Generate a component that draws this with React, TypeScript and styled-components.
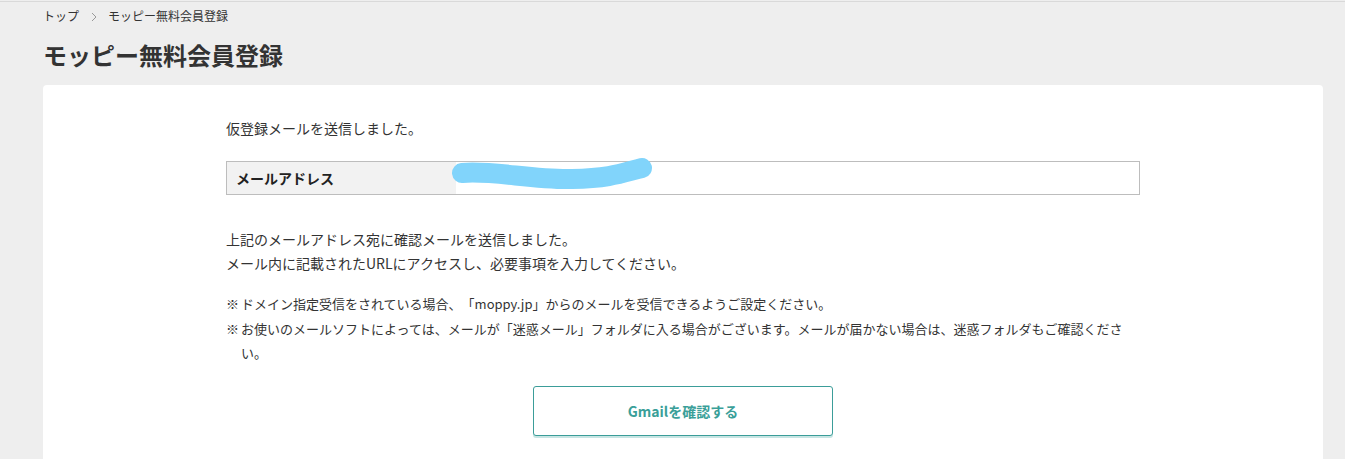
import React from "react";
import styled, { createGlobalStyle } from "styled-components";

const GlobalStyle = createGlobalStyle`
  html, body {
    margin: 0;
    padding: 0;
    background: #eeeeee;
    overflow: hidden;
  }
  body {
    font-family: "Noto Sans CJK JP", "Noto Sans", sans-serif;
    color: #333333;
    text-spacing-trim: space-all;
  }
  * { box-sizing: border-box; }
`;

const Page = styled.div`
  margin-top: 1px;
  border-top: 1px solid #d9d9d9;
  min-height: 458px;
`;

const Breadcrumb = styled.nav`
  display: flex;
  align-items: center;
  height: 28px;
  padding-left: 43px;
  font-size: 12px;
  line-height: 28px;
  color: #333;
`;

const Crumb = styled.span`
  white-space: nowrap;
`;

const Sep = styled.svg`
  width: 6px;
  height: 10px;
  margin: 1px 11px 0 12px;
`;

const Title = styled.h1`
  margin: 8px 0 13px 43px;
  font-size: 24px;
  line-height: 34px;
  font-weight: 700;
  color: #333;
`;

const Card = styled.main`
  margin: 0 22px 0 43px;
  background: #ffffff;
  border-radius: 4px 4px 0 0;
  padding: 31px 0 40px;
  min-height: 380px;
`;

const Column = styled.div`
  width: 914px;
  margin: 0 auto;
`;

const Text = styled.p<{ $mt?: number }>`
  margin: ${(p) => p.$mt ?? 0}px 0 0;
  font-size: 14px;
  line-height: 24px;
`;

const InfoTable = styled.div`
  margin-top: 21px;
  display: flex;
  height: 34px;
  border: 1px solid #bdbdbd;
  position: relative;
`;

const Label = styled.div`
  width: 229px;
  background: #f2f2f2;
  display: flex;
  align-items: center;
  padding-left: 9px;
  font-size: 14px;
  font-weight: 700;
  color: #222;
`;

const Value = styled.div`
  flex: 1;
  display: flex;
  align-items: center;
  padding-left: 14px;
  font-size: 14px;
`;

const Redaction = styled.svg`
  position: absolute;
  left: 225px;
  top: -4px;
  width: 205px;
  height: 36px;
  overflow: visible;
`;

const Notes = styled.ul`
  list-style: none;
  margin: 17px 0 0;
  padding: 0 8px 0 0;
  font-size: 13px;
  line-height: 24.5px;
`;

const Note = styled.li`
  display: flex;
`;

const Mark = styled.span`
  flex: 0 0 15px;
  width: 15px;
`;

const NoteText = styled.span`
  flex: 1;
`;

const ButtonRow = styled.div`
  display: flex;
  justify-content: center;
  margin-top: 20px;
`;

const OutlineButton = styled.button`
  width: 300px;
  height: 50px;
  background: #ffffff;
  border: 1px solid #3b9d99;
  border-radius: 3px;
  box-shadow: 0 2px 0 #c7e5e3;
  color: #3a9f99;
  font-family: inherit;
  font-size: 14px;
  font-weight: 700;
  cursor: pointer;
`;

export default function App() {
  return (
    <>
      <GlobalStyle />
      <Page>
        <Breadcrumb>
          <Crumb>トップ</Crumb>
          <Sep viewBox="0 0 6 10" aria-hidden="true">
            <path d="M1 1 L5 5 L1 9" fill="none" stroke="#9a9a9a" strokeWidth="1" />
          </Sep>
          <Crumb>モッピー無料会員登録</Crumb>
        </Breadcrumb>
        <Title>モッピー無料会員登録</Title>
        <Card>
          <Column>
            <Text>仮登録メールを送信しました。</Text>
            <InfoTable>
              <Label>メールアドレス</Label>
              <Value />
              <Redaction viewBox="0 0 205 36" aria-hidden="true">
                <path
                  d="M10 15 C 40 12, 80 22, 120 21 S 170 15, 190 10"
                  fill="none"
                  stroke="#81d4fb"
                  strokeWidth="20"
                  strokeLinecap="round"
                  strokeLinejoin="round"
                />
              </Redaction>
            </InfoTable>
            <Text $mt={32}>
              上記のメールアドレス宛に確認メールを送信しました。
              <br />
              メール内に記載されたURLにアクセスし、必要事項を入力してください。
            </Text>
            <Notes>
              <Note>
                <Mark>※</Mark>
                <NoteText>
                  ドメイン指定受信をされている場合、「moppy.jp」からのメールを受信できるようご設定ください。
                </NoteText>
              </Note>
              <Note>
                <Mark>※</Mark>
                <NoteText>
                  お使いのメールソフトによっては、メールが「迷惑メール」フォルダに入る場合がございます。メールが届かない場合は、迷惑フォルダもご確認ください。
                </NoteText>
              </Note>
            </Notes>
            <ButtonRow>
              <OutlineButton type="button">Gmailを確認する</OutlineButton>
            </ButtonRow>
          </Column>
        </Card>
      </Page>
    </>
  );
}
